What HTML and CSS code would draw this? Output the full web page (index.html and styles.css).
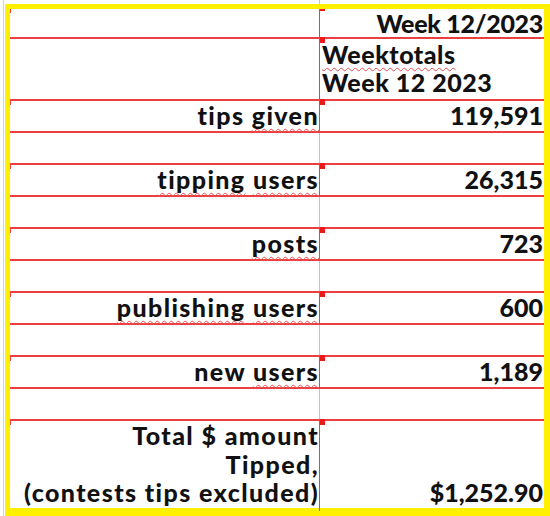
FILE: index.html
```html
<!DOCTYPE html>
<html lang="en">
<head>
  <meta charset="UTF-8">
  <meta name="viewport" content="width=device-width, initial-scale=1.0">
  <title>Weektotals Week 12 2023</title>
  <link rel="stylesheet" href="styles.css">
</head>
<body>
  <div class="frame">
    <div class="row row-head">
      <div class="label"></div>
      <div class="value filled"><span>Week 12/2023</span></div>
    </div>
    <div class="row row-title">
      <div class="label"></div>
      <div class="value filled left"><span><span class="typo">Weektotals</span><br>Week 12 2023</span></div>
    </div>
    <div class="row">
      <div class="label filled"><span>tips <span class="typo">given</span></span></div>
      <div class="value filled"><span>119,591</span></div>
    </div>
    <div class="row"><div class="label"></div><div class="value"></div></div>
    <div class="row">
      <div class="label filled"><span><span class="typo">tipping</span> <span class="typo">users</span></span></div>
      <div class="value filled"><span>26,315</span></div>
    </div>
    <div class="row"><div class="label"></div><div class="value"></div></div>
    <div class="row">
      <div class="label filled"><span><span class="typo">posts</span></span></div>
      <div class="value filled"><span>723</span></div>
    </div>
    <div class="row"><div class="label"></div><div class="value"></div></div>
    <div class="row">
      <div class="label filled"><span><span class="typo">publishing</span> <span class="typo">users</span></span></div>
      <div class="value filled"><span>600</span></div>
    </div>
    <div class="row"><div class="label"></div><div class="value"></div></div>
    <div class="row">
      <div class="label filled"><span>new <span class="typo">users</span></span></div>
      <div class="value filled"><span>1,189</span></div>
    </div>
    <div class="row"><div class="label"></div><div class="value"></div></div>
    <div class="row row-total">
      <div class="label filled"><span>Total $ amount<br>Tipped,<br>(contests tips excluded)</span></div>
      <div class="value filled"><span>$1,252.90</span></div>
    </div>
  </div>
</body>
</html>
```

FILE: styles.css
```css
/* Spreadsheet snippet */
html, body {
  margin: 0;
  padding: 0;
}

body {
  width: 550px;
  height: 516px;
  overflow: hidden;
  background:
    linear-gradient(#c4c4c4, #c4c4c4) 319px 0 / 1px 100% no-repeat,
    linear-gradient(#d4d4d4, #d4d4d4) 3px 0 / 1px 100% no-repeat,
    #fff;
  font-family: Lato, "Open Sans", sans-serif;
  font-weight: 900;
  font-size: 25px;
  line-height: 28px;
  color: #111;
}

.frame {
  margin: 4px 0 0 5px;
  width: 534px;
  height: 499px;
  border-style: solid;
  border-color: #fff000;
  border-width: 5px 6px 8px 5px;
  background: #fff;
}

.row {
  display: grid;
  grid-template-columns: 309px 1fr;
  height: 30px;
  border-bottom: 2px solid #ec4040;
}

.row-head {
  height: 28px;
}

.row-title {
  height: 60px;
}

.row-total {
  height: 87px;
  border-bottom: none;
  line-height: 28.5px;
}

.label,
.value {
  position: relative;
  display: flex;
  align-items: flex-end;
  justify-content: flex-end;
  text-align: right;
  white-space: nowrap;
  padding: 0 1px 2px 0;
}

.label {
  letter-spacing: 1.4px;
  padding-right: 0;
}

.value {
  letter-spacing: 0;
  border-left: 1px solid #c4c4c4;
}

.row-total .label,
.row-total .value {
  padding-bottom: 4px;
}

.value.filled {
  border-left-color: #ec4040;
}

.row-head .value {
  letter-spacing: -0.3px;
  padding-right: 1px;
}

.value.left {
  justify-content: flex-start;
  text-align: left;
  padding-left: 2px;
  padding-bottom: 3px;
  letter-spacing: 0.5px;
}

/* cell anchor marks */
.value.filled::before {
  content: "";
  position: absolute;
  left: 0;
  top: -2px;
  width: 5px;
  height: 6px;
  background: #f01818;
}

.row-head .value.filled::before {
  top: 0;
  height: 2px;
}

.label.filled::before,
.row-head .label::before {
  content: "";
  position: absolute;
  left: 0;
  top: -2px;
  width: 1px;
  height: 6px;
  background: #ec4040;
}

.row-head .label::before {
  top: 0;
  height: 4px;
}

/* spell check squiggle */
.typo {
  text-decoration: underline wavy #e84c4c;
  text-decoration-thickness: 1px;
  text-underline-offset: 3px;
  text-decoration-skip-ink: none;
}
```
